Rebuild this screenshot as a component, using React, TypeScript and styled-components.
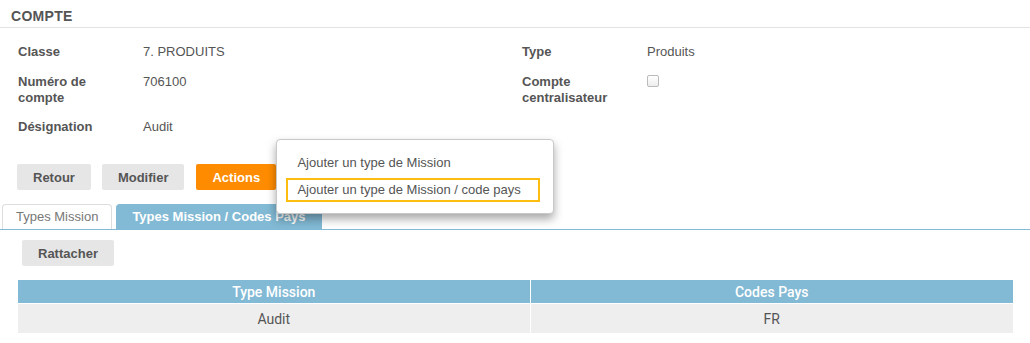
import React from "react";
import styled, { createGlobalStyle } from "styled-components";

const Global = createGlobalStyle`
  html, body { margin: 0; padding: 0; background: #fff; }
  body { font-family: "Liberation Sans", Arial, sans-serif; font-size: 13px; color: #555; }
`;

const Page = styled.div`
  width: 1030px;
  height: 343px;
  overflow: hidden;
  position: relative;
`;

const Header = styled.div`
  height: 28px;
  box-sizing: border-box;
  padding: 8px 11px 0;
  border-bottom: 1px solid #e3e3e3;
  font-weight: bold;
  font-size: 14px;
  letter-spacing: 0.3px;
  line-height: 16px;
  color: #555;
`;

const Fields = styled.div`
  display: grid;
  grid-template-columns: 504px 1fr;
  padding: 16px 0 0 18px;
`;

const Field = styled.div<{ $mb?: number }>`
  display: grid;
  grid-template-columns: 125px 1fr;
  line-height: 16px;
  margin-bottom: ${(p) => p.$mb ?? 14}px;
`;

const Label = styled.div`
  font-weight: bold;
  color: #555;
`;

const Value = styled.div`
  color: #555;
`;

const Check = styled.span`
  display: inline-block;
  width: 10px;
  height: 10px;
  margin-top: 1px;
  border: 1px solid #bbb;
  border-radius: 2px;
  background: linear-gradient(#fff, #ededed);
`;

const ButtonRow = styled.div`
  display: flex;
  gap: 11px;
  padding: 29px 0 0 17px;
  height: 26px;
`;

const Button = styled.button<{ $primary?: boolean }>`
  height: 26px;
  padding: 0 16px;
  border: none;
  border-radius: 2px;
  font-family: "Liberation Sans", Arial, sans-serif;
  font-weight: bold;
  font-size: 13px;
  color: ${(p) => (p.$primary ? "#fff" : "#555")};
  background: ${(p) => (p.$primary ? "#ff8c00" : "#e6e6e6")};
`;

const ActionsWrap = styled.div`
  position: relative;
  margin-left: 1px;
`;

const Menu = styled.div`
  position: absolute;
  left: 80px;
  top: -25px;
  width: 278px;
  height: 75px;
  box-sizing: border-box;
  background: #fff;
  border: 1px solid #c8c8c8;
  border-radius: 4px;
  box-shadow: 0 5px 10px rgba(0, 0, 0, 0.35);
  padding: 11px 0 0 9px;
  z-index: 5;
`;

const MenuItem = styled.div<{ $focus?: boolean }>`
  width: 254px;
  height: 24px;
  box-sizing: border-box;
  padding-left: 9px;
  line-height: 20px;
  font-size: 13px;
  color: #555;
  border: 2px solid ${(p) => (p.$focus ? "#fdbd10" : "transparent")};
  margin-bottom: 3px;
`;

const Tabs = styled.div`
  display: flex;
  align-items: flex-end;
  gap: 4px;
  margin-top: 14px;
  padding-left: 2px;
  height: 25px;
  border-bottom: 1px solid #82b9d4;
`;

const Tab = styled.div<{ $active?: boolean }>`
  height: 25px;
  box-sizing: border-box;
  padding: ${(p) => (p.$active ? "0 15px" : "0 13px 0 13px")};
  line-height: 23px;
  font-size: 13px;
  border: 1px solid ${(p) => (p.$active ? "#82b9d4" : "#ddd")};
  border-bottom: none;
  border-radius: 4px 4px 0 0;
  background: ${(p) => (p.$active ? "#82b9d4" : "#fff")};
  color: ${(p) => (p.$active ? "#fff" : "#777")};
  font-weight: ${(p) => (p.$active ? "bold" : "normal")};
`;

const TabBody = styled.div`
  padding: 10px 17px 0 18px;
`;

const SmallRow = styled.div`
  display: flex;
  padding-left: 4px;
`;

const Table = styled.table`
  margin-top: 14px;
  width: 995px;
  table-layout: fixed;
  border-collapse: collapse;
  font-family: Roboto, "Liberation Sans", sans-serif;
  font-size: 14px;
`;

const Col = styled.col<{ $w?: number }>`
  width: ${(p) => (p.$w ? `${p.$w}px` : "auto")};
`;

const Th = styled.th`
  height: 23px;
  padding: 0;
  background: #82b9d4;
  color: #fff;
  font-weight: 500;
  text-align: center;
  border-left: 1px solid #fff;
  &:first-child { border-left: none; }
`;

const Td = styled.td`
  height: 29px;
  padding: 0;
  background: #eee;
  color: #555;
  text-align: center;
  border-top: 1px solid #fff;
  border-left: 1px solid #fff;
  &:first-child { border-left: none; }
`;

export default function App() {
  return (
    <Page>
      <Global />
      <Header>COMPTE</Header>
      <Fields>
        <div>
          <Field>
            <Label>Classe</Label>
            <Value>7. PRODUITS</Value>
          </Field>
          <Field $mb={13}>
            <Label>
              Numéro de
              <br />
              compte
            </Label>
            <Value>706100</Value>
          </Field>
          <Field $mb={0}>
            <Label>Désignation</Label>
            <Value>Audit</Value>
          </Field>
        </div>
        <div>
          <Field>
            <Label>Type</Label>
            <Value>Produits</Value>
          </Field>
          <Field>
            <Label>
              Compte
              <br />
              centralisateur
            </Label>
            <Value>
              <Check />
            </Value>
          </Field>
        </div>
      </Fields>
      <ButtonRow>
        <Button>Retour</Button>
        <Button>Modifier</Button>
        <ActionsWrap>
          <Button $primary>Actions</Button>
          <Menu>
            <MenuItem>Ajouter un type de Mission</MenuItem>
            <MenuItem $focus>Ajouter un type de Mission / code pays</MenuItem>
          </Menu>
        </ActionsWrap>
      </ButtonRow>
      <Tabs>
        <Tab>Types Mission</Tab>
        <Tab $active>Types Mission / Codes Pays</Tab>
      </Tabs>
      <TabBody>
        <SmallRow>
          <Button>Rattacher</Button>
        </SmallRow>
        <Table>
          <colgroup>
            <Col $w={512} />
            <Col />
          </colgroup>
          <thead>
            <tr>
              <Th>Type Mission</Th>
              <Th>Codes Pays</Th>
            </tr>
          </thead>
          <tbody>
            <tr>
              <Td>Audit</Td>
              <Td>FR</Td>
            </tr>
          </tbody>
        </Table>
      </TabBody>
    </Page>
  );
}
